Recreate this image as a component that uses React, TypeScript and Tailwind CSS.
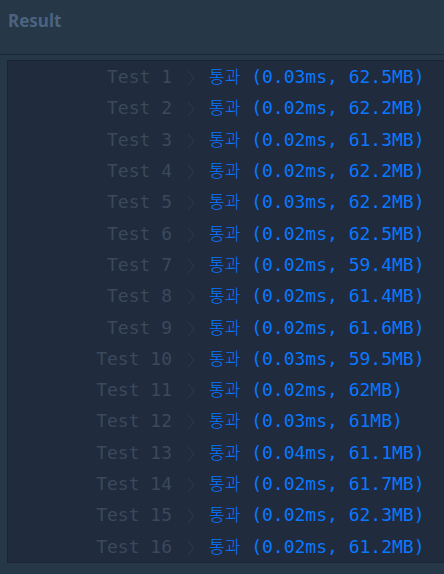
import React from 'react';

const results = [
  { time: '0.03ms', mem: '62.5MB' },
  { time: '0.02ms', mem: '62.2MB' },
  { time: '0.02ms', mem: '61.3MB' },
  { time: '0.02ms', mem: '62.2MB' },
  { time: '0.03ms', mem: '62.2MB' },
  { time: '0.02ms', mem: '62.5MB' },
  { time: '0.02ms', mem: '59.4MB' },
  { time: '0.02ms', mem: '61.4MB' },
  { time: '0.02ms', mem: '61.6MB' },
  { time: '0.03ms', mem: '59.5MB' },
  { time: '0.02ms', mem: '62MB' },
  { time: '0.03ms', mem: '61MB' },
  { time: '0.04ms', mem: '61.1MB' },
  { time: '0.02ms', mem: '61.7MB' },
  { time: '0.02ms', mem: '62.3MB' },
  { time: '0.02ms', mem: '61.2MB' },
];

export default function App() {
  return (
    <div className="w-[444px] h-[574px] overflow-hidden bg-[#263747]">
      {/* Header */}
      <div className="h-[55px] border-b border-[#1c2735] px-2 pt-[8px]">
        <h2
          className="text-[17px] font-bold text-[#4c6380]"
          style={{ fontFamily: '"Noto Sans", "Liberation Sans", sans-serif' }}
        >
          Result
        </h2>
      </div>

      {/* Console output */}
      <div className="ml-[7px] mt-[5px] border-l border-b border-t border-[#1b2431] bg-[#202b3d]">
        <table
          className="text-[18px]"
          style={{ fontFamily: '"DejaVu Sans Mono", "Noto Sans CJK KR", monospace' }}
        >
          <tbody>
            {results.map((r, i) => (
              <tr key={i} className="h-[31.3px]">
                <td className="w-[164px] text-right text-[#3b495c] whitespace-pre">Test {i + 1}</td>
                <td className="w-[37px] text-center">
                  <svg width="8" height="16" viewBox="0 0 8 16" className="inline-block align-middle">
                    <path d="M1 1 L7 8 L1 15" fill="none" stroke="#2f3c4e" strokeWidth="1" />
                  </svg>
                </td>
                <td className="text-[#0a78ff] whitespace-pre">
                  <span style={{ fontFamily: '"Noto Sans CJK KR", sans-serif' }} className="font-light text-[17px]">통과</span>{' '}
                  ({r.time}, {r.mem})
                </td>
              </tr>
            ))}
          </tbody>
        </table>
      </div>
    </div>
  );
}
